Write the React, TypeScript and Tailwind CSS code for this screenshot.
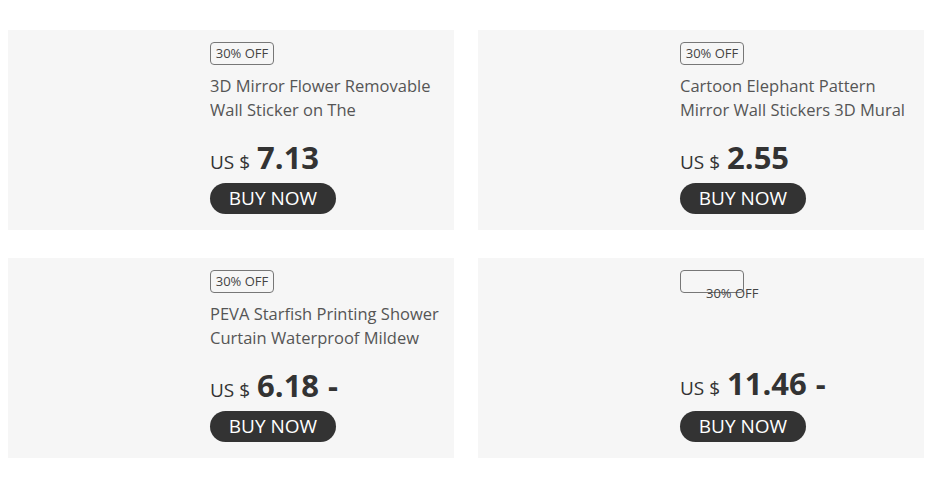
import React from 'react';

type Product = {
  title?: string;
  price: string;
  range?: boolean;
  brokenBadge?: boolean;
};

const products: Product[] = [
  { title: '3D Mirror Flower Removable Wall Sticker on The', price: '7.13' },
  { title: 'Cartoon Elephant Pattern Mirror Wall Stickers 3D Mural', price: '2.55' },
  { title: 'PEVA Starfish Printing Shower Curtain Waterproof Mildew', price: '6.18', range: true },
  { price: '11.46', range: true, brokenBadge: true },
];

const Badge: React.FC<{ broken?: boolean }> = ({ broken }) => {
  if (broken) {
    return (
      <div className="relative w-[64px] h-[23px] rounded-[4px] border border-[#777]">
        <span className="absolute left-[25px] top-[14px] text-[13px] leading-[16px] text-[#444] whitespace-nowrap">
          30% OFF
        </span>
      </div>
    );
  }
  return (
    <div className="w-[64px] h-[23px] rounded-[4px] border border-[#777] flex items-center justify-center text-[13px] text-[#444]">
      30% OFF
    </div>
  );
};

const Card: React.FC<{ p: Product }> = ({ p }) => (
  <div className="h-[200px] bg-[#f6f6f6] pl-[202px] pt-[12px] pb-[16px] flex flex-col">
    <Badge broken={p.brokenBadge} />
    {p.title && (
      <div className="mt-[9px] h-[48px] w-[240px] text-[16.5px] leading-[24px] text-[#555] overflow-hidden">
        {p.title}
      </div>
    )}
    <div className="flex-1" />
    <div className={`${p.brokenBadge ? 'mb-[2px]' : ''} flex items-baseline h-[34px] leading-[34px] text-[#333]`}>
      <span className="text-[19px] mr-[7px]">US $</span>
      <span className="text-[31px] font-bold">{p.price}</span>
      {p.range && <span className="text-[31px] font-bold ml-[9px]">-</span>}
    </div>
    <button className="mt-[9px] w-[126px] h-[31px] rounded-full bg-[#333] text-white text-[19px] leading-none flex items-center justify-center">
      BUY NOW
    </button>
  </div>
);

const App: React.FC = () => (
  <div className="w-[932px] h-[486px] bg-white px-[8px] pt-[30px] font-['Open_Sans',sans-serif]">
    <div className="grid grid-cols-2 gap-x-[24px] gap-y-[28px]">
      {products.map((p, i) => (
        <Card key={i} p={p} />
      ))}
    </div>
  </div>
);

export default App;
